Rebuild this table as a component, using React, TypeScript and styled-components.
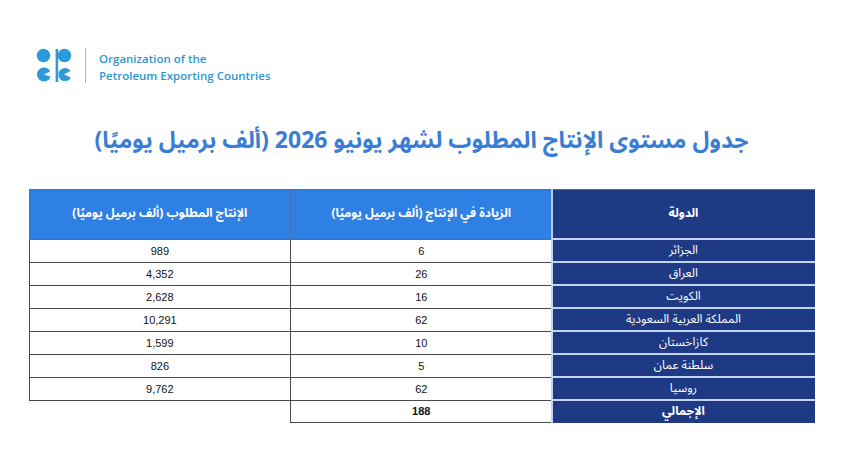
import React from 'react';
import styled, { createGlobalStyle } from 'styled-components';

const GlobalStyle = createGlobalStyle`
  html, body {
    margin: 0;
    padding: 0;
    background: #ffffff;
  }
  body {
    font-family: "Liberation Sans", Arial, sans-serif;
  }
`;

const arabicFont = `"Noto Sans Arabic", "DejaVu Sans", "Noto Sans", sans-serif`;

const Page = styled.div`
  width: 843px;
  height: 474px;
  background: #ffffff;
  overflow: hidden;
`;

const Brand = styled.header`
  display: flex;
  align-items: center;
  gap: 13px;
  padding: 47px 0 0 36px;
`;

const Divider = styled.div`
  width: 1px;
  height: 35px;
  background: #7fc0e6;
`;

const BrandName = styled.div`
  font-family: "Open Sans", "Liberation Sans", sans-serif;
  font-size: 11.5px;
  font-weight: 600;
  line-height: 17px;
  color: #2e96cf;
  margin-top: 3px;
`;

const Title = styled.h1`
  margin: 39px 0 0;
  text-align: center;
  font-family: ${arabicFont};
  font-size: 23px;
  font-weight: 700;
  color: #3a7dd6;
  line-height: 36px;
`;

const Table = styled.table`
  margin: 30px auto 0;
  width: 786px;
  table-layout: fixed;
  border-collapse: collapse;
`;

const HeadCell = styled.th<{ $dark?: boolean }>`
  height: 48px;
  padding: 0;
  font-family: ${arabicFont};
  font-size: 12px;
  font-weight: 700;
  line-height: 20px;
  color: #ffffff;
  text-align: center;
  background: ${p => (p.$dark ? '#1f3a85' : '#2f80e4')};
  border: 1px solid #4d6fa8;
  ${p => (p.$dark ? 'border-left: 2px solid #b9cdef; border-right-color: #1f3a85;' : '')}
`;

const CountryCell = styled.td<{ $bold?: boolean }>`
  height: 21px;
  padding: 0;
  background: #1f3a85;
  color: #ffffff;
  font-family: ${arabicFont};
  font-size: 12px;
  font-weight: ${p => (p.$bold ? 700 : 400)};
  line-height: 18px;
  text-align: center;
  border-top: 2px solid #c3d4f0;
  border-left: 2px solid #c3d4f0;
  border-right: 1px solid #1f3a85;
  border-bottom: 1px solid #1f3a85;
`;

const NumCell = styled.td<{ $bold?: boolean; $empty?: boolean }>`
  height: 21px;
  padding: 0;
  text-align: center;
  font-size: 11px;
  line-height: 20px;
  font-weight: ${p => (p.$bold ? 700 : 400)};
  color: #111111;
  border: ${p => (p.$empty ? 'none' : '1px solid #4a4a4a')};
  border-top: 1px solid #4a4a4a;
`;

const rows = [
  { country: 'الجزائر', increase: '6', required: '989' },
  { country: 'العراق', increase: '26', required: '4,352' },
  { country: 'الكويت', increase: '16', required: '2,628' },
  { country: 'المملكة العربية السعودية', increase: '62', required: '10,291' },
  { country: 'كازاخستان', increase: '10', required: '1,599' },
  { country: 'سلطنة عمان', increase: '5', required: '826' },
  { country: 'روسيا', increase: '62', required: '9,762' },
];

const OpecLogo = () => (
  <svg width="36" height="35" viewBox="0 0 36 35">
    <defs>
      <mask id="cut-e">
        <rect width="36" height="35" fill="#fff" />
        <path d="M8 26.5 L16 22.5 L16 29 Z" fill="#000" />
      </mask>
      <mask id="cut-c">
        <rect width="36" height="35" fill="#fff" />
        <path d="M28 26.5 L36 22 L36 30 Z" fill="#000" />
      </mask>
    </defs>
    <g fill="#2b9ad9">
      <circle cx="7.5" cy="7.5" r="6.8" />
      <circle cx="28.5" cy="7.5" r="6.8" />
      <rect x="19.6" y="1" width="2.6" height="33" />
      <circle cx="8" cy="26.5" r="7" mask="url(#cut-e)" />
      <circle cx="29" cy="26.5" r="6.6" mask="url(#cut-c)" />
    </g>
  </svg>
);

export default function App() {
  return (
    <Page>
      <GlobalStyle />
      <Brand>
        <OpecLogo />
        <Divider />
        <BrandName>
          Organization of the
          <br />
          Petroleum Exporting Countries
        </BrandName>
      </Brand>
      <Title dir="rtl">جدول مستوى الإنتاج المطلوب لشهر يونيو 2026 (ألف برميل يوميًا)</Title>
      <Table dir="rtl">
        <thead>
          <tr>
            <HeadCell $dark>الدولة</HeadCell>
            <HeadCell>الزيادة في الإنتاج (ألف برميل يوميًا)</HeadCell>
            <HeadCell>الإنتاج المطلوب (ألف برميل يوميًا)</HeadCell>
          </tr>
        </thead>
        <tbody>
          {rows.map(r => (
            <tr key={r.country}>
              <CountryCell>{r.country}</CountryCell>
              <NumCell>{r.increase}</NumCell>
              <NumCell>{r.required}</NumCell>
            </tr>
          ))}
          <tr>
            <CountryCell $bold>الإجمالي</CountryCell>
            <NumCell $bold>188</NumCell>
            <NumCell $empty />
          </tr>
        </tbody>
      </Table>
    </Page>
  );
}
